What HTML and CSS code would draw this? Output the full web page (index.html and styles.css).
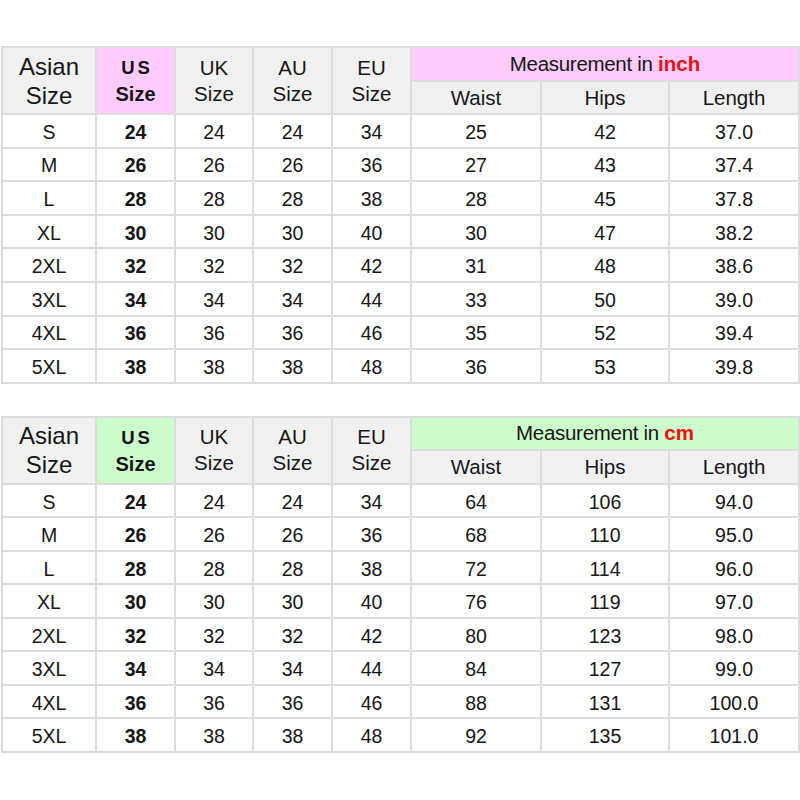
FILE: index.html
```html
<!DOCTYPE html>
<html>
<head>
<meta charset="utf-8">
<link rel="stylesheet" href="styles.css">
</head>
<body>
<div class="page">
<table class="chart chart-inch">
  <colgroup>
    <col class="c-asian"><col class="c-us"><col class="c-uk"><col class="c-au"><col class="c-eu"><col class="c-waist"><col class="c-hips"><col class="c-len">
  </colgroup>
  <thead>
    <tr class="hrow1">
      <th rowspan="2" class="h-asian">Asian<br>Size</th>
      <th rowspan="2" class="h-us"><span class="us">US</span><br><span class="us-size">Size</span></th>
      <th rowspan="2" class="h-std">UK<br>Size</th>
      <th rowspan="2" class="h-std">AU<br>Size</th>
      <th rowspan="2" class="h-std">EU<br>Size</th>
      <th colspan="3" class="h-meas">Measurement in <b class="unit">inch</b></th>
    </tr>
    <tr class="hrow2">
      <th class="h-sub">Waist</th><th class="h-sub">Hips</th><th class="h-sub">Length</th>
    </tr>
  </thead>
  <tbody>
    <tr><td>S</td><td class="b">24</td><td>24</td><td>24</td><td>34</td><td>25</td><td>42</td><td>37.0</td></tr>
    <tr><td>M</td><td class="b">26</td><td>26</td><td>26</td><td>36</td><td>27</td><td>43</td><td>37.4</td></tr>
    <tr><td>L</td><td class="b">28</td><td>28</td><td>28</td><td>38</td><td>28</td><td>45</td><td>37.8</td></tr>
    <tr><td>XL</td><td class="b">30</td><td>30</td><td>30</td><td>40</td><td>30</td><td>47</td><td>38.2</td></tr>
    <tr><td>2XL</td><td class="b">32</td><td>32</td><td>32</td><td>42</td><td>31</td><td>48</td><td>38.6</td></tr>
    <tr><td>3XL</td><td class="b">34</td><td>34</td><td>34</td><td>44</td><td>33</td><td>50</td><td>39.0</td></tr>
    <tr><td>4XL</td><td class="b">36</td><td>36</td><td>36</td><td>46</td><td>35</td><td>52</td><td>39.4</td></tr>
    <tr><td>5XL</td><td class="b">38</td><td>38</td><td>38</td><td>48</td><td>36</td><td>53</td><td>39.8</td></tr>
  </tbody>
</table>

<table class="chart chart-cm">
  <colgroup>
    <col class="c-asian"><col class="c-us"><col class="c-uk"><col class="c-au"><col class="c-eu"><col class="c-waist"><col class="c-hips"><col class="c-len">
  </colgroup>
  <thead>
    <tr class="hrow1">
      <th rowspan="2" class="h-asian">Asian<br>Size</th>
      <th rowspan="2" class="h-us"><span class="us">US</span><br><span class="us-size">Size</span></th>
      <th rowspan="2" class="h-std">UK<br>Size</th>
      <th rowspan="2" class="h-std">AU<br>Size</th>
      <th rowspan="2" class="h-std">EU<br>Size</th>
      <th colspan="3" class="h-meas">Measurement in <b class="unit">cm</b></th>
    </tr>
    <tr class="hrow2">
      <th class="h-sub">Waist</th><th class="h-sub">Hips</th><th class="h-sub">Length</th>
    </tr>
  </thead>
  <tbody>
    <tr><td>S</td><td class="b">24</td><td>24</td><td>24</td><td>34</td><td>64</td><td>106</td><td>94.0</td></tr>
    <tr><td>M</td><td class="b">26</td><td>26</td><td>26</td><td>36</td><td>68</td><td>110</td><td>95.0</td></tr>
    <tr><td>L</td><td class="b">28</td><td>28</td><td>28</td><td>38</td><td>72</td><td>114</td><td>96.0</td></tr>
    <tr><td>XL</td><td class="b">30</td><td>30</td><td>30</td><td>40</td><td>76</td><td>119</td><td>97.0</td></tr>
    <tr><td>2XL</td><td class="b">32</td><td>32</td><td>32</td><td>42</td><td>80</td><td>123</td><td>98.0</td></tr>
    <tr><td>3XL</td><td class="b">34</td><td>34</td><td>34</td><td>44</td><td>84</td><td>127</td><td>99.0</td></tr>
    <tr><td>4XL</td><td class="b">36</td><td>36</td><td>36</td><td>46</td><td>88</td><td>131</td><td>100.0</td></tr>
    <tr><td>5XL</td><td class="b">38</td><td>38</td><td>38</td><td>48</td><td>92</td><td>135</td><td>101.0</td></tr>
  </tbody>
</table>
</div>
</body>
</html>
```

FILE: styles.css
```css
html, body {
  margin: 0;
  padding: 0;
  background: #ffffff;
}

.page {
  padding: 46px 0 0 1px;
  display: flex;
  flex-direction: column;
  gap: 32px;
  font-family: "Liberation Sans", Arial, sans-serif;
  color: #161616;
}

.chart {
  table-layout: fixed;
  border-collapse: separate;
  border-spacing: 2px;
  background: #dcdcdc;
  width: 799px;
}

.c-asian { width: 92px; }
.c-us { width: 77px; }
.c-uk { width: 76px; }
.c-au { width: 77px; }
.c-eu { width: 77px; }
.c-waist { width: 128px; }
.c-hips { width: 126px; }
.c-len { width: 128px; }

.chart th,
.chart td {
  padding: 0;
  text-align: center;
  vertical-align: middle;
  overflow: hidden;
}

.chart th {
  background: #f1f1f1;
  font-weight: normal;
}

.chart td {
  background: #ffffff;
  font-size: 19.5px;
  line-height: 22px;
  padding-top: 2px;
}

.chart td.b {
  font-weight: bold;
}

.chart-inch .hrow1 { height: 32px; }
.chart-inch .hrow2 { height: 31px; }
.chart-inch tbody tr { height: 31.6px; }

.chart-cm .hrow1 { height: 31px; }
.chart-cm .hrow2 { height: 32px; }
.chart-cm tbody tr { height: 31.5px; }

.h-asian {
  font-size: 24px;
  line-height: 29px;
}

.h-std {
  font-size: 20.5px;
  line-height: 26px;
}

.h-us {
  font-weight: bold;
  font-size: 20px;
  line-height: 26px;
}

.chart-inch .h-us { background: #fdccfd; }
.chart-cm .h-us { background: #ccfbcc; }

.chart .h-us .us {
  font-size: 18.5px;
  letter-spacing: 3px;
  padding-left: 3px;
  font-weight: bold;
}

.chart .h-us .us-size {
  font-size: 20px;
  font-weight: bold;
}

.h-meas {
  font-size: 20.5px;
  letter-spacing: -0.3px;
}

.chart-inch .h-meas { background: #fdccfd; }
.chart-cm .h-meas { background: #ccfbcc; }

.unit {
  color: #ee1111;
  font-weight: bold;
  letter-spacing: 0;
}

.h-sub {
  font-size: 20.5px;
  padding-top: 2px;
}
```
